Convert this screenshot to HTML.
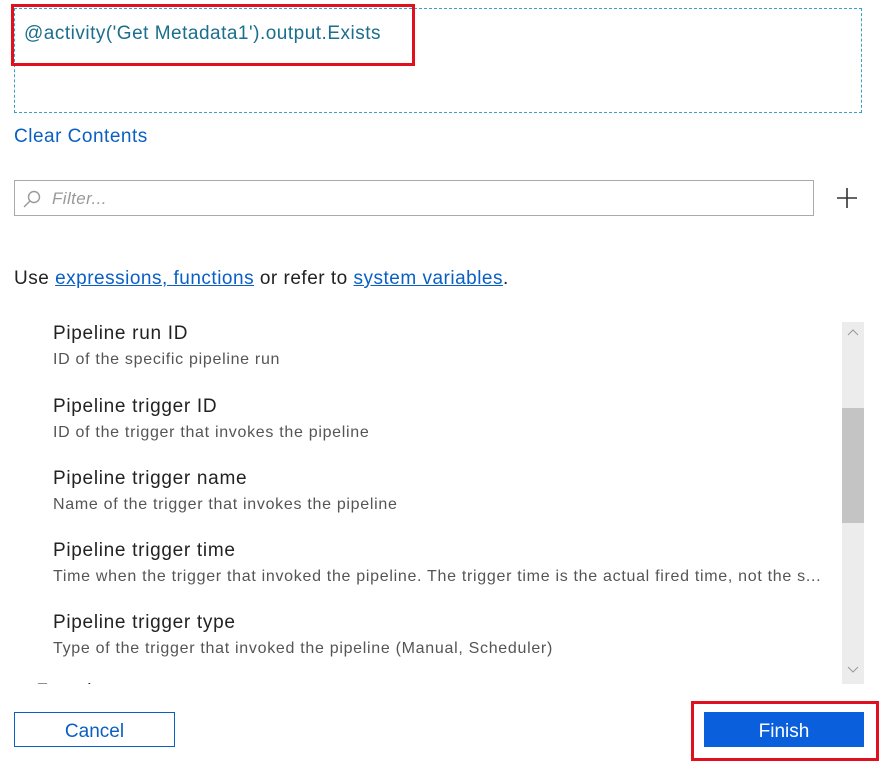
<!DOCTYPE html>
<html><head><style>
body{margin:0;width:887px;height:768px;background:#fff;font-family:"Liberation Sans",sans-serif;position:relative;overflow:hidden;color:#222}
.a{position:absolute}
.t{font-size:19px;letter-spacing:0.7px;color:#222;white-space:nowrap}
.d{font-size:16px;letter-spacing:0.7px;color:#555;white-space:nowrap}
a{color:#0a5fc4;text-decoration:underline}
.b{font-size:19px;letter-spacing:0.5px}
</style></head><body>
<div class="a" style="left:14px;top:8px;width:846px;height:103px;border:1px dashed #3aa0c8"></div>
<div class="a" style="left:11px;top:4px;width:398px;height:56px;border:3px solid #e0101e"></div>
<div class="a b" style="left:24px;top:23px;color:#1a6e8e">@activity('Get Metadata1').output.Exists</div>
<div class="a b" style="left:14px;top:126px;color:#0a5fc4">Clear Contents</div>
<div class="a" style="left:14px;top:180px;width:798px;height:34px;border:1px solid #aaa"></div>
<svg class="a" style="left:22px;top:189px" width="20" height="20"><circle cx="12" cy="8" r="5.5" fill="none" stroke="#999" stroke-width="1.4"/><line x1="8" y1="12" x2="2" y2="18" stroke="#999" stroke-width="1.4"/></svg>
<div class="a" style="left:52px;top:189px;font-size:17px;font-style:italic;color:#999;letter-spacing:0.4px">Filter...</div>
<svg class="a" style="left:836px;top:187px" width="22" height="22"><path d="M11 1V21M1 11H21" stroke="#333" stroke-width="1.6"/></svg>
<div class="a b" style="left:14px;top:268px">Use <a>expressions, functions</a> or refer to <a>system variables</a>.</div>
<div class="a" style="left:0;top:318px;width:840px;height:366px;overflow:hidden">
<div class="a t" style="left:53px;top:5px">Pipeline run ID</div>
<div class="a d" style="left:53px;top:33px">ID of the specific pipeline run</div>
<div class="a t" style="left:53px;top:78px">Pipeline trigger ID</div>
<div class="a d" style="left:53px;top:106px">ID of the trigger that invokes the pipeline</div>
<div class="a t" style="left:53px;top:150px">Pipeline trigger name</div>
<div class="a d" style="left:53px;top:178px">Name of the trigger that invokes the pipeline</div>
<div class="a t" style="left:53px;top:222px">Pipeline trigger time</div>
<div class="a d" style="left:53px;top:250px">Time when the trigger that invoked the pipeline. The trigger time is the actual fired time, not the s...</div>
<div class="a t" style="left:53px;top:294px">Pipeline trigger type</div>
<div class="a d" style="left:53px;top:322px">Type of the trigger that invoked the pipeline (Manual, Scheduler)</div>
<div class="a t" style="left:20px;top:362px">▸ Functions</div>
</div>
<div class="a" style="left:842px;top:322px;width:22px;height:362px;background:#ececec"></div>
<div class="a" style="left:842px;top:408px;width:22px;height:115px;background:#c4c4c4"></div>
<svg class="a" style="left:846px;top:326px" width="14" height="12"><path d="M2 9L7 4L12 9" fill="none" stroke="#999"/></svg>
<svg class="a" style="left:846px;top:664px" width="14" height="12"><path d="M2 3L7 8L12 3" fill="none" stroke="#999"/></svg>
<div class="a" style="left:14px;top:712px;width:159px;height:33px;border:1px solid #0a5fc4;color:#0a5fc4;font-size:19px;text-align:center;line-height:37px">Cancel</div>
<div class="a" style="left:691px;top:701px;width:182px;height:54px;border:3px solid #e0101e"></div>
<div class="a" style="left:704px;top:712px;width:160px;height:35px;background:#0a5fdc;color:#fff;font-size:19px;text-align:center;line-height:39px">Finish</div>
</body></html>
